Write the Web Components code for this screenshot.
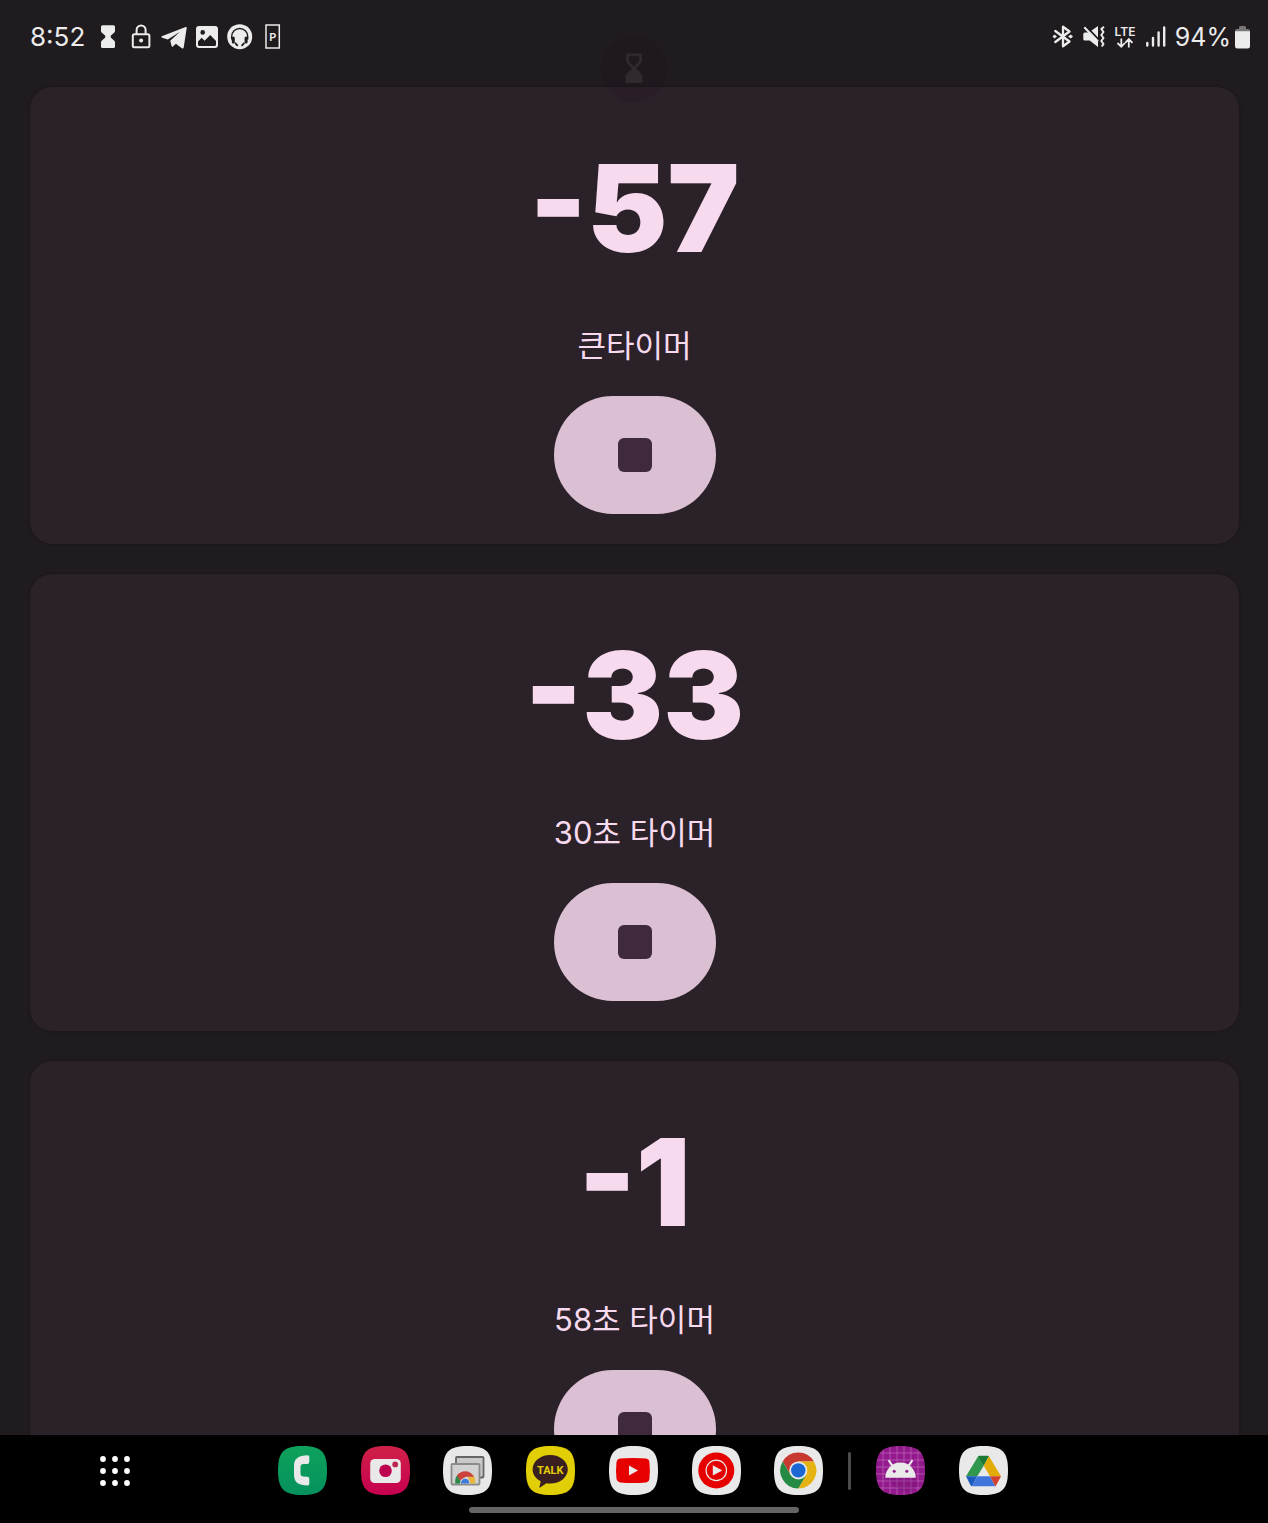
<!DOCTYPE html>
<html lang="ko">
<head>
<meta charset="utf-8">
<meta name="viewport" content="width=device-width, initial-scale=1">
<title>타이머</title>
<style>
  html, body { height: 100%; margin: 0; }
  body {
    --bg: #1f1b1e;
    --card: #2b2128;
    --on-card: #f7daee;
    --action: #dbbfd3;
    --on-action: #3e2a3b;
    --status: #ececec;
    background: var(--bg);
    color: var(--on-card);
    font-family: Inter, "Noto Sans CJK KR", sans-serif;
    overflow: hidden;
  }
</style>
</head>
<body>
<timer-screen>
  <status-bar slot="status" time="8:52" battery="94%"></status-bar>
  <timer-card remaining="-57">큰타이머</timer-card>
  <timer-card remaining="-33">30초 타이머</timer-card>
  <timer-card remaining="-1">58초 타이머</timer-card>
  <app-dock slot="dock">
    <app-icon name="phone" label="전화"></app-icon>
    <app-icon name="camera" label="카메라"></app-icon>
    <app-icon name="remote" label="원격 데스크톱"></app-icon>
    <app-icon name="talk" label="카카오톡"></app-icon>
    <app-icon name="youtube" label="YouTube"></app-icon>
    <app-icon name="music" label="YouTube Music"></app-icon>
    <app-icon name="chrome" label="Chrome"></app-icon>
    <app-icon slot="recent" name="android" label="타이머"></app-icon>
    <app-icon slot="recent" name="drive" label="드라이브"></app-icon>
  </app-dock>
</timer-screen>

<script>
// Status bar glyphs: [width, height, markup]
const STATUS_ICONS = {
  hourglass: [26, 26, `<path fill="currentColor" d="M7.500 1.300h11a1.500 1.500 0 0 1 1.500 1.500v4.400a2 2 0 0 1-.7 1.400l-3.600 3.200v1.800l3.600 3.200a2 2 0 0 1 .7 1.400v4.300a1.500 1.500 0 0 1-1.500 1.500h-11A1.500 1.500 0 0 1 6 22.500v-4.300a2 2 0 0 1 .7-1.400l3.600-3.200v-1.800L6.700 8.600A2 2 0 0 1 6 7.200V2.800a1.500 1.500 0 0 1 1.500-1.500z"/>`],
  lock: [26, 26, `<g fill="none" stroke="currentColor" stroke-width="2"><rect x="4.800" y="10.200" width="16.600" height="13" rx="1.500"/><path d="M8.600 10V6a4.500 4.500 0 0 1 9 0v4"/></g><circle cx="13.100" cy="16.400" r="2" fill="currentColor"/>`],
  telegram: [26, 26, `<path fill="currentColor" d="M.8 12.200 24.600 3q1.300-.4 1.100 1L22.700 23.500q-.4 1.700-1.800.7l-6-4.500-3 2.700q-1 .8-1.300-.4L9.200 16.800l9.800-9L6.800 15.500 1.200 13.700q-1.400-.6-.4-1.500z"/>`],
  picture: [26, 26, `<rect x="2" y="2" width="22" height="22" rx="3" fill="currentColor"/><circle cx="8.700" cy="8.400" r="2.300" fill="var(--bg)"/><path fill="var(--bg)" d="M4 17.500 7.700 13.800 10.600 16.700 16.200 11 22 17v3.500q0 1.500-1.500 1.500h-15Q4 22 4 20.500z"/>`],
  headset: [26, 26, `<circle cx="12.700" cy="12.700" r="12.500" fill="currentColor"/><g fill="none" stroke="var(--bg)"><path d="M4.700 15.500v-3a8 8 0 0 1 16 0v3" stroke-width="1.400"/><path d="M6.300 14v4M19.100 14v4" stroke-width="3" stroke-linecap="round"/><path d="M8.500 19.300l1.800 2M16.900 19.300l-1.800 2" stroke-width="1.800" stroke-linecap="round"/></g>`],
  parking: [26, 26, `<rect x="6" y="1" width="13.300" height="23" fill="none" stroke="currentColor" stroke-width="1.500"/><text x="12.700" y="16.500" text-anchor="middle" font-size="11" font-weight="600" fill="currentColor">P</text>`],
  bluetooth: [24, 24, `<path fill="none" stroke="currentColor" stroke-width="2.300" stroke-linejoin="round" stroke-linecap="round" d="M4.300 6 18.500 16.500 12 21.300V1.700l6.500 4.800L4.300 17"/><path fill="currentColor" d="M1.500 11.500l2-2 2.500 2-2.500 2zM22 11.500l-2.200-2-2.800 2 2.800 2z"/>`],
  mute: [24, 24, `<path fill="currentColor" d="M2.800 7.500h4L16 1v21l-8.300-6.500H2.800Q1.300 15.500 1.300 14V9q0-1.500 1.500-1.500z"/><path d="M4 1.500 17 15" stroke="var(--bg)" stroke-width="2"/><path d="M2.300 2.300 16 16.500" stroke="currentColor" stroke-width="2"/><path fill="none" stroke="currentColor" stroke-width="2" stroke-linejoin="round" d="M22 1.800 19.300 4 21.500 7 19.300 10 21.500 13 19.300 16 21.500 19 19.800 21.500"/>`],
  lte: [24, 24, `<text x="12" y="11" text-anchor="middle" font-size="12" font-weight="600" fill="currentColor">LTE</text><path fill="none" stroke="currentColor" stroke-width="1.800" d="M8.300 13.500v8M4.500 18l3.800 3.800 3.500-3.800M15.800 22.500v-8M12.200 17.800 15.800 14l3.700 3.800"/>`],
  signal: [24, 24, `<path stroke="currentColor" stroke-width="2.400" stroke-linecap="round" d="M3.300 18v2.500M9 13v7.500M14.600 7.500v13M20.200 2.500v18"/>`],
  battery: [15, 24, `<path fill="#777" d="M4 2.500Q4 1 5.500 1h4Q11 1 11 2.500V4h2q2 0 2 2v4H0V6q0-2 2-2h2z"/><path fill="currentColor" d="M0 6.200h15V21q0 2.500-2.500 2.500h-10Q0 23.500 0 21z"/>`]
}

const TILE = "M24.500 0C6 0 0 6 0 24.500S6 49 24.500 49 49 43 49 24.500 43 0 24.500 0z"
const tile = fill => `<path d="${TILE}" fill="${fill}"/>`

// Launcher icons on a 49x49 rounded tile
const APP_ICONS = {
  phone: `<linearGradient id="g" x2="0" y2="1"><stop stop-color="#0ea25c"/><stop offset="1" stop-color="#05915d"/></linearGradient>${tile("url(#g)")}
    <path fill="#e9e9e9" d="M29.500 9.200q1.800 0 1.800 1.800v5q0 1.800-1.800 1.900l-4.500.2q-2.500.2-2.500 2.500v7.500q0 2.300 2.500 2.500l4.500.2q1.800.1 1.800 1.900v5q0 1.800-1.800 1.800Q16 39.500 16 29v-9.500Q16 9.400 29.500 9.200z"/>`,
  camera: `<linearGradient id="g" x2="0" y2="1"><stop stop-color="#d02148"/><stop offset="1" stop-color="#c6004f"/></linearGradient>${tile("url(#g)")}
    <rect x="9.200" y="13" width="30.600" height="24" rx="4.500" fill="#e9e9e9"/><circle cx="24.500" cy="24.800" r="6.300" fill="#bd0050"/><circle cx="34.200" cy="18.400" r="2.900" fill="#bd2450"/>`,
  remote: `${tile("#e8e8e8")}
    <rect x="13" y="11" width="27.500" height="20.500" rx="1" fill="#c9c9c9" stroke="#656565" stroke-width="1.800"/>
    <rect x="8.500" y="18" width="28" height="20.500" rx="1" fill="#d2d2d2" stroke="#8b8b8b" stroke-width="1.800"/>
    <path fill="#2b8a4a" d="M12.200 37.600V35q0-3.500 2.200-6.200l4.600 8.800z"/>
    <path fill="#e8b63b" d="M32.200 37.600V35q0-3.500-2.200-6.200l-5 3 1.500 5.800z"/>
    <path fill="#cb433a" d="M14 29.300a10 10 0 0 1 17 1.500h-8.500L17 34.500z"/>
    <path fill="#e8e8e8" d="M17 37.600a5.200 5.200 0 0 1 10.400 0z"/><path fill="#3f7bd8" d="M18 37.600v-.6a4.200 4.200 0 0 1 8.400 0v.6z"/>`,
  talk: `${tile("#e2ce05")}
    <path fill="#3a1f20" d="M24.200 9c9.800 0 17.600 6.300 17.600 14.300s-7.800 14.300-17.600 14.300q-2 0-3.800-.3l-6.300 4.300q-.9.5-.7-.6l1.400-5.700C9.800 32.900 6.600 28.600 6.600 23.300 6.600 15.300 14.400 9 24.200 9z"/>
    <text x="24.200" y="27.800" text-anchor="middle" font-family="Roboto, sans-serif" font-size="11" font-weight="700" fill="#e2ce05">TALK</text>`,
  youtube: `${tile("#e9e9e9")}<path fill="#e60000" d="M24 12q9 0 13 .6 3 .5 3.400 3.400.9 8.500 0 17-.4 2.900-3.400 3.400-13 1.200-26 0-3-.5-3.500-3.400-.9-8.500 0-17 .5-2.900 3.500-3.400Q15 12 24 12z"/><path fill="#e9e9e9" d="M20 19.500v10l9-5z"/>`,
  music: `${tile("#e9e9e9")}<circle cx="24.300" cy="24.400" r="18" fill="#e60000"/><circle cx="24.300" cy="24.400" r="10.200" fill="none" stroke="#e9e9e9" stroke-width="1.200"/><path fill="#e9e9e9" d="M20.800 19.200v10.400l9.500-5.200z"/>`,
  chrome: `${tile("#e9e9e9")}<g transform="translate(.3 .4)"><path fill="#c83a30" d="M8.400 15a18 18 0 0 1 31.200 0H24l-7.800 13.500z"/><path fill="#e5b412" d="M39.600 15A18 18 0 0 1 24 42l7.800-13.500L24 15z"/><path fill="#258a43" d="M24 42A18 18 0 0 1 8.400 15l7.800 13.500h15.600z"/><circle cx="24" cy="24" r="9" fill="#e9e9e9"/><circle cx="24" cy="24" r="7.200" fill="#1b68d4"/></g>`,
  android: `${tile("#921a8c")}<clipPath id="c"><path d="${TILE}"/></clipPath>
    <path clip-path="url(#c)" stroke="#c069bb" stroke-width=".7" d="M7 0v49M14 0v49M21 0v49M28 0v49M35 0v49M42 0v49M0 7h49M0 14h49M0 21h49M0 28h49M0 35h49M0 42h49"/>
    <path fill="#741070" opacity=".3" d="M10 32h29l4 6-8 8H25z"/>
    <path fill="#e9e9e9" d="M9.300 31.700a15.200 15.200 0 0 1 30.400 0z"/><path stroke="#e9e9e9" stroke-width="2" stroke-linecap="round" d="M13 14.800l4.300 6M36 14.800l-4.300 6"/><circle cx="18.200" cy="25.300" r="1.500" fill="#921a8c"/><circle cx="30.800" cy="25.300" r="1.500" fill="#921a8c"/>`,
  drive: `${tile("#e9e9e9")}<path fill="#30984c" d="M19 10.500q.8-.8 2-.8l3.700 10-6.400 10.600H7z"/><path fill="#1c7a35" d="M20.500 9.700h8l1.500.5-5.300 9.500-5.400-9.300z"/><path fill="#e2ab05" d="M30 10.200 42 30.300H31l-6.300-10.600z"/><path fill="#1c5bc0" d="M7 30.300h11.300L13 40.300q-1 0-1.600-1.200z"/><path fill="#3f76dc" d="M18.300 30.300H31l5.300 10H13z"/><path fill="#d4402f" d="M31 30.300h11l-4.500 8.500q-.5 1-1.200 1.500z"/>`
}

const statusIcon = name => {
  const [w, h, body] = STATUS_ICONS[name]
  return `<svg width="${w}" height="${h}" viewBox="0 0 ${w} ${h}" aria-hidden="true">${body}</svg>`
}

class TimerScreen extends HTMLElement {
  constructor() {
    super()
    this.attachShadow({ mode: "open" }).innerHTML = `
      <style>
        :host {
          display: flex;
          flex-direction: column;
          height: 100vh;
          position: relative;
        }
        main {
          flex: 1;
          min-height: 0;
          overflow: hidden;
          display: flex;
          flex-direction: column;
          gap: 30px;
          padding: 13px 29px 0 30px;
        }
        ::slotted(*) { flex: none; }
        /* fading app badge left over from the launch transition */
        .badge {
          position: absolute;
          top: 36px;
          left: 50%;
          width: 66px;
          height: 66px;
          margin-left: -33px;
          border-radius: 50%;
          background: rgba(36, 12, 38, 0.12);
          display: grid;
          place-items: center;
        }
      </style>
      <slot name="status"></slot>
      <main><slot></slot></main>
      <slot name="dock"></slot>
      <div class="badge">
        <svg width="20" height="32" viewBox="0 0 20 34" aria-hidden="true">
          <path d="M3 2h14v6q0 2-7 8.500Q3 10 3 8z" fill="none" stroke="#302a2e" stroke-width="3" stroke-linejoin="round"/>
          <path d="M10 15q9 7 9 10v5q0 2-2 2H3q-2 0-2-2v-5q0-3 9-10z" fill="#302a2e"/>
        </svg>
      </div>
    `
  }
}

class StatusBar extends HTMLElement {
  constructor() {
    super()
    this.attachShadow({ mode: "open" })
  }

  connectedCallback() {
    this.shadowRoot.innerHTML = `
      <style>
        :host {
          display: flex;
          align-items: center;
          justify-content: space-between;
          height: 74px;
          padding: 0 18px 0 30px;
          box-sizing: border-box;
          color: var(--status);
          font-size: 26px;
          line-height: 32px;
        }
        div { display: flex; align-items: center; gap: 7px; }
        .clock { gap: 10px; }
        .level { gap: 4px; font-size: 25px; }
        svg { display: block; }
      </style>
      <div class="clock">
        <time>${this.getAttribute("time")}</time>
        <div>${["hourglass", "lock", "telegram", "picture", "headset", "parking"].map(statusIcon).join("")}</div>
      </div>
      <div>
        ${["bluetooth", "mute", "lte", "signal"].map(statusIcon).join("")}
        <div class="level"><span>${this.getAttribute("battery")}</span>${statusIcon("battery")}</div>
      </div>
    `
  }
}

class TimerCard extends HTMLElement {
  constructor() {
    super()
    this.attachShadow({ mode: "open" })
  }

  connectedCallback() {
    this.shadowRoot.innerHTML = `
      <style>
        :host {
          display: flex;
          flex-direction: column;
          align-items: center;
          padding: 30px;
          border-radius: 22px;
          background: var(--card);
          box-shadow: 0 0 3px rgba(0, 0, 0, 0.3);
        }
        .remaining {
          font-size: 121px;
          font-weight: 900;
          line-height: 182px;
        }
        .name {
          margin: 25px 0 28px;
          font-size: 31px;
          font-weight: 400;
          line-height: 44px;
        }
        button {
          display: grid;
          place-items: center;
          width: 162px;
          height: 118px;
          padding: 0;
          border: 0;
          border-radius: 59px;
          background: var(--action);
        }
        .stop {
          width: 34px;
          height: 34px;
          border-radius: 6px;
          background: var(--on-action);
        }
      </style>
      <div class="remaining" role="timer">${this.getAttribute("remaining")}</div>
      <div class="name"><slot></slot></div>
      <button type="button" aria-label="정지"><span class="stop"></span></button>
    `
  }
}

class AppIcon extends HTMLElement {
  constructor() {
    super()
    this.attachShadow({ mode: "open" })
  }

  connectedCallback() {
    this.shadowRoot.innerHTML = `
      <style>
        :host { display: block; }
        button { display: block; padding: 0; border: 0; background: none; }
        svg { display: block; }
      </style>
      <button type="button" aria-label="${this.getAttribute("label")}">
        <svg width="49" height="49" viewBox="0 0 49 49" aria-hidden="true">${APP_ICONS[this.getAttribute("name")]}</svg>
      </button>
    `
  }
}

class AppDock extends HTMLElement {
  constructor() {
    super()
    const dots = [3, 15, 27].flatMap(y => [3, 15, 27].map(x => `<circle cx="${x}" cy="${y}" r="2.900"/>`)).join("")
    this.attachShadow({ mode: "open" }).innerHTML = `
      <style>
        :host {
          display: flex;
          flex-direction: column;
          gap: 12px;
          padding: 11px 0 10px;
          background: #000;
        }
        nav { display: flex; align-items: center; padding-left: 100px; }
        .all {
          margin-right: 148px;
          padding: 0;
          border: 0;
          background: none;
        }
        svg { display: block; fill: #fff; }
        .pinned {
          flex: none;
          display: flex;
          justify-content: space-between;
          width: 43vw;
        }
        .divider {
          width: 3px;
          height: 38px;
          margin: 0 25px;
          border-radius: 2px;
          background: #4c4c4c;
        }
        .recent { display: flex; gap: 34px; }
        .handle {
          align-self: center;
          width: 26%;
          height: 6px;
          border-radius: 3px;
          background: #646464;
        }
      </style>
      <nav>
        <button class="all" type="button" aria-label="모든 앱"><svg width="30" height="30" viewBox="0 0 30 30">${dots}</svg></button>
        <div class="pinned"><slot></slot></div>
        <div class="divider"></div>
        <div class="recent"><slot name="recent"></slot></div>
      </nav>
      <div class="handle"></div>
    `
  }
}

customElements.define("timer-screen", TimerScreen)
customElements.define("status-bar", StatusBar)
customElements.define("timer-card", TimerCard)
customElements.define("app-icon", AppIcon)
customElements.define("app-dock", AppDock)
</script>
</body>
</html>
